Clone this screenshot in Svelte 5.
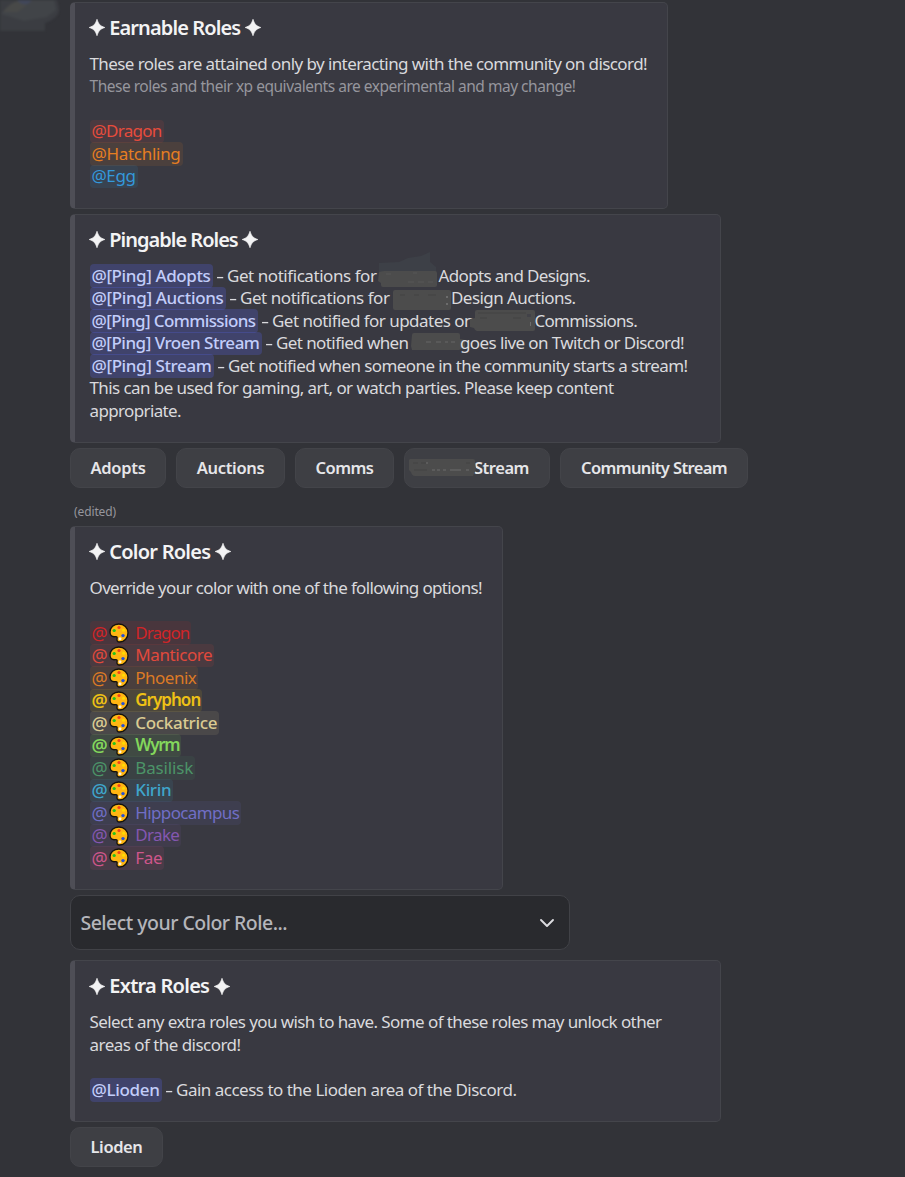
<script>
  function fit(node, width) {
    const natural = node.getBoundingClientRect().width;
    const count = [...node.textContent].length;
    node.style.letterSpacing = `${(width - natural) / count}px`;
  }

  const earnable = [
    { name: '@Dragon', w: 70, color: '#e74c3c' },
    { name: '@Hatchling', w: 89, color: '#e67e22' },
    { name: '@Egg', w: 44, color: '#3498db' }
  ];

  const pings = [
    { name: '@[Ping] Adopts', w: 119, a: 'Get notifications for', aw: 149.5, s: 'a', b: 'Adopts and Designs.', bw: 151.5, gap: 62 },
    { name: '@[Ping] Auctions', w: 132, a: 'Get notifications for', aw: 149.5, s: 'b', b: 'Design Auctions.', bw: 124.5, gap: 61.5 },
    { name: '@[Ping] Commissions', w: 164, a: 'Get notified for updates on', aw: 202, s: 'c', b: 'Commissions.', bw: 102.5, gap: 60.5 },
    { name: '@[Ping] Vroen Stream', w: 168, a: 'Get notified when', aw: 132.5, s: 'd', b: 'goes live on Twitch or Discord!', bw: 224, gap: 51.5 },
    { name: '@[Ping] Stream', w: 120, a: 'Get notified when someone in the community starts a stream!', aw: 459.5 }
  ];

  const colors = [
    { name: 'Dragon', w: 54, color: '#d02528' },
    { name: 'Manticore', w: 77, color: '#e0493c' },
    { name: 'Phoenix', w: 61, color: '#dc7a25' },
    { name: 'Gryphon', w: 65, color: '#eec115', bold: true },
    { name: 'Cockatrice', w: 82, color: '#dacb92', mid: true },
    { name: 'Wyrm', w: 44, color: '#83d75c', bold: true },
    { name: 'Basilisk', w: 58, color: '#4c9468' },
    { name: 'Kirin', w: 36, color: '#3fa5cb', mid: true },
    { name: 'Hippocampus', w: 104, color: '#706ec5' },
    { name: 'Drake', w: 44, color: '#8457b0' },
    { name: 'Fae', w: 27, color: '#cf568b' }
  ];

  const buttons = [
    { label: 'Adopts', w: 55, box: 96 },
    { label: 'Auctions', w: 67.5, box: 109 },
    { label: 'Comms', w: 58, box: 99 },
    { label: 'Stream', w: 55, box: 146, hidden: true },
    { label: 'Community Stream', w: 146, box: 188 }
  ];
</script>

{#snippet star()}
  <svg class="star" width="16" height="17" viewBox="0 0 16 17"><path d="M8 .3C9.500 5 11 6.900 15.800 8.500 11 10.100 9.500 12 8 16.700 6.500 12 5 10.100.2 8.500 5 6.900 6.500 5 8 .3Z" /></svg>
{/snippet}

{#snippet title(text, w)}
  <h3>{@render star()}<span use:fit={w}>{text}</span>{@render star()}</h3>
{/snippet}

{#snippet palette()}
  <svg class="palette" width="20" height="20" viewBox="0 0 20 20">
    <path d="M9.800 1C4.800 1 1 4.600 1 9c0 3.500 2 5 4.800 4.700 1.800-.2 2.700.2 2.300 1.700-.6 2.200.4 3.600 2.600 3.600 4.800 0 8.300-4.200 8.300-9.200C19 4.600 15 1 9.800 1Z" fill="#ffb612" stroke="#15120c" stroke-width="1.300" />
    <circle cx="10" cy="4.500" r="1.600" fill="#f0441c" />
    <circle cx="5.200" cy="7.500" r="1.600" fill="#1fc41b" />
    <circle cx="14.600" cy="7.300" r="1.500" fill="#ffdc00" />
    <circle cx="14" cy="12.600" r="1.700" fill="#2450d8" />
    <circle cx="11" cy="15.700" r="1.500" fill="#fff4dc" />
  </svg>
{/snippet}

{#snippet smudge(kind)}
  <svg class="smudge {kind}" width="70" height="36" viewBox="0 0 70 36">
    {#if kind === 'a'}
      <path d="M2 17v-9l20-1 9-4 13-2 9-4v10l6 5v8Z" fill="#3d4047" />
      <path d="M2 17l5-1h51q2 0 2 2v12q0 2-2 2H6q-2 0-2-2v-2l-3-2Z" fill="#4c4c4c" />
      <path d="M9 19h5M36 18h4M31 27h6m4 0h6m4 0h5" stroke="#575757" />
    {:else if kind === 'b'}
      <rect x="3" y="12" width="58" height="20" rx="2" fill="#4c4c4c" />
      <path d="M10 17h5M24 17h5M38 17h8" stroke="#424242" />
      <path d="M57 18v2m0 5v2" stroke="#777" stroke-width="1.500" />
    {:else if kind === 'c'}
      <path d="M2 12q0-2 2-2h56q2 0 2 2v17q0 2-2 2H4q-2 0-3-3l-4-1v-8l5-1Z" fill="#4c4c4c" />
      <path d="M5 13h48M7 18h7m26 0h8" stroke="#424242" />
      <path d="M57.500 22v4" stroke="#6d6d6d" />
      <rect x="54" y="14" width="4" height="3" fill="#424248" />
    {:else}
      <path d="M3 12q0-2 2-2h44q2 0 2 2v4l5 1v7l-6 3H3l-1-4Z" fill="#4c4c4c" />
      <path d="M17 19h5m5 0h5m4 0h3m3 0h4" stroke="#666" />
    {/if}
  </svg>
{/snippet}

<main>
  <svg class="avatar" width="62" height="34" viewBox="0 0 62 34">
    <path d="M0 0h57l2 8q1 8-9 13l-5 2v8H0Z" fill="#3b3d42" />
    <path d="M1 14Q10 2 27 0h27l2 10-9 7-23 4Z" fill="#414448" />
    <path d="M3 12Q9 3 18 1l9 4-9 7Z" fill="#484948" />
    <path d="M17 0q8 9 15 0Z" fill="#41475a" />
  </svg>

  <article class="card earn">
    {@render title('Earnable Roles', 131)}
    <div class="line"><span use:fit={557.5}>These roles are attained only by interacting with the community on discord!</span></div>
    <div class="line sub"><span use:fit={486}>These roles and their xp equivalents are experimental and may change!</span></div>
    <div class="line"></div>
    {#each earnable as r}
      <div class="line"><span class="role" style:--c={r.color}><span use:fit={r.w}>{r.name}</span></span></div>
    {/each}
  </article>

  <article class="card ping">
    {@render title('Pingable Roles', 128.5)}
    {#each pings as p}
      <div class="line">
        <span class="mention"><span use:fit={p.w}>{p.name}</span></span>
        <span class="dash">-</span>
        <span use:fit={p.aw}>{p.a}</span>
        {#if p.b}
          <span class="gap" style:width="{p.gap}px">{@render smudge(p.s)}</span>
          <span class="over" use:fit={p.bw}>{p.b}</span>
        {/if}
      </div>
    {/each}
    <div class="line"><span use:fit={524}>This can be used for gaming, art, or watch parties. Please keep content</span></div>
    <div class="line"><span use:fit={91.5}>appropriate.</span></div>
  </article>

  <div class="buttons">
    {#each buttons as b}
      <button class:hidden={b.hidden} style:width="{b.box}px">
        {#if b.hidden}
          <svg class="cover" width="70" height="20" viewBox="0 0 70 20">
            <path d="M2 1h63q2 0 2 2l1 8-3 7H7q-3 0-4-4L1 12V2Z" fill="#4c4c4c" />
            <path d="M5 5h5m3 0h5M58 5h4M6 12h13" stroke="#424242" />
            <path d="M24 12h3m2 0h3m3 0h3m4 0h11m5 0h3M18 5h2" stroke="#6c6c6c" />
          </svg>
        {/if}
        <span use:fit={b.w}>{b.label}</span>
      </button>
    {/each}
  </div>

  <div class="edited"><span use:fit={42}>(edited)</span></div>

  <article class="card color">
    {@render title('Color Roles', 101)}
    <div class="line"><span use:fit={392.5}>Override your color with one of the following options!</span></div>
    <div class="line"></div>
    {#each colors as r}
      <div class="line">
        <span class="role" class:bold={r.bold} class:mid={r.mid} style:--c={r.color}>
          <span class="at" use:fit={16.5}>@</span>{@render palette()}<span use:fit={r.w}>{r.name}</span>
        </span>
      </div>
    {/each}
  </article>

  <div class="select">
    <span use:fit={206.5}>Select your Color Role...</span>
    <svg width="16" height="10" viewBox="0 0 16 10"><path d="M2 2l6 6 6-6" fill="none" stroke="#dcdce0" stroke-width="1.900" stroke-linecap="round" stroke-linejoin="round" /></svg>
  </div>

  <article class="card extra">
    {@render title('Extra Roles', 100)}
    <div class="line"><span use:fit={572}>Select any extra roles you wish to have. Some of these roles may unlock other</span></div>
    <div class="line"><span use:fit={151}>areas of the discord!</span></div>
    <div class="line"></div>
    <div class="line">
      <span class="mention"><span use:fit={68}>@Lioden</span></span>
      <span class="dash">-</span>
      <span use:fit={340.5}>Gain access to the Lioden area of the Discord.</span>
    </div>
  </article>

  <div class="buttons last"><button style:width="93px"><span use:fit={52}>Lioden</span></button></div>
</main>

<style>
  :global(body) {
    margin: 0;
    background: #323338;
  }
  main {
    position: relative;
    box-sizing: border-box;
    width: 905px;
    height: 1177px;
    padding: 2px 0 0 70px;
    overflow: hidden;
    background: #323338;
    color: #dadadd;
    font: 17px/22.5px 'Noto Sans', sans-serif;
  }
  .avatar {
    position: absolute;
    left: 0;
    top: 0;
    filter: blur(1px);
  }
  .card {
    box-sizing: border-box;
    padding: 10.5px 14px 0 14px;
    border: 1px solid #44454b;
    border-left: 5px solid #4e4e56;
    border-radius: 5px;
    background: #393941;
  }
  .earn { width: 598px; height: 207px; }
  .ping { width: 651px; height: 229px; margin-top: 5px; }
  .color { width: 433px; height: 364px; margin-top: 4px; }
  .extra { width: 651px; height: 162px; margin-top: 10px; padding-top: 11.25px; }
  .extra h3 { margin-bottom: 11.25px; }
  h3 {
    display: flex;
    align-items: center;
    gap: 4.25px;
    height: 27.5px;
    margin: 0 0 11.75px;
    color: #f3f3f4;
    font-size: 20px;
    font-weight: 600;
    line-height: 27.5px;
  }
  .star {
    flex: none;
    margin-top: 1px;
  }
  .star path {
    fill: #f3f3f4;
    stroke: #f3f3f4;
    stroke-width: 0.7;
  }
  .line {
    display: flex;
    align-items: center;
    height: 22.5px;
    padding-left: 0.5px;
    white-space: nowrap;
  }
  .line > span, h3 span, button span { flex: none; }
  .sub {
    color: #96969d;
    font-size: 15.5px;
  }
  .role, .mention {
    display: flex;
    align-items: center;
    height: 23.5px;
    padding: 0 2px;
    border-radius: 4px;
  }
  .role {
    color: var(--c);
    background: color-mix(in srgb, var(--c) 11%, transparent);
  }
  .at { font-size: 18px; }
  .bold { font-weight: 600; }
  .mid { font-weight: 500; }
  .palette { margin: 0 6px 0 1.25px; }
  .mention {
    background: rgba(88, 101, 242, 0.24);
    color: #c2cdfa;
    font-weight: 500;
  }
  .dash {
    width: 11.5px;
    margin-left: 3px;
    transform: scaleX(1.5);
    transform-origin: 0 50%;
  }
  .gap {
    display: block;
    height: 36px;
  }
  .smudge {
    position: relative;
    top: -3px;
    left: 0;
    overflow: visible;
  }
  .smudge.c { left: -1.5px; }
  .over { position: relative; }
  .buttons {
    display: flex;
    gap: 10px;
    margin-top: 5px;
  }
  button {
    position: relative;
    display: flex;
    align-items: center;
    justify-content: center;
    box-sizing: border-box;
    height: 40px;
    padding: 0;
    border: 1px solid #434449;
    border-radius: 10px;
    background: #3e3f44;
    color: #e6e6e9;
    font: 600 16.5px/22px 'Noto Sans', sans-serif;
    white-space: nowrap;
  }
  button.hidden {
    justify-content: flex-end;
    padding-right: 20px;
  }
  .cover {
    position: absolute;
    left: 3px;
    top: 9px;
  }
  .edited {
    height: 34px;
    padding: 0 0 0 4px;
    color: #96969d;
    font-size: 12px;
    line-height: 48px;
  }
  .select {
    display: flex;
    align-items: center;
    justify-content: space-between;
    box-sizing: border-box;
    width: 500px;
    height: 55px;
    margin-top: 5px;
    padding: 0 14px 0 9.5px;
    border: 1px solid #414247;
    border-radius: 10px;
    background: #292a2e;
    color: #b4b5ba;
    font-size: 19.5px;
    font-weight: 500;
  }
  .select span { padding-top: 1.5px; }
</style>
